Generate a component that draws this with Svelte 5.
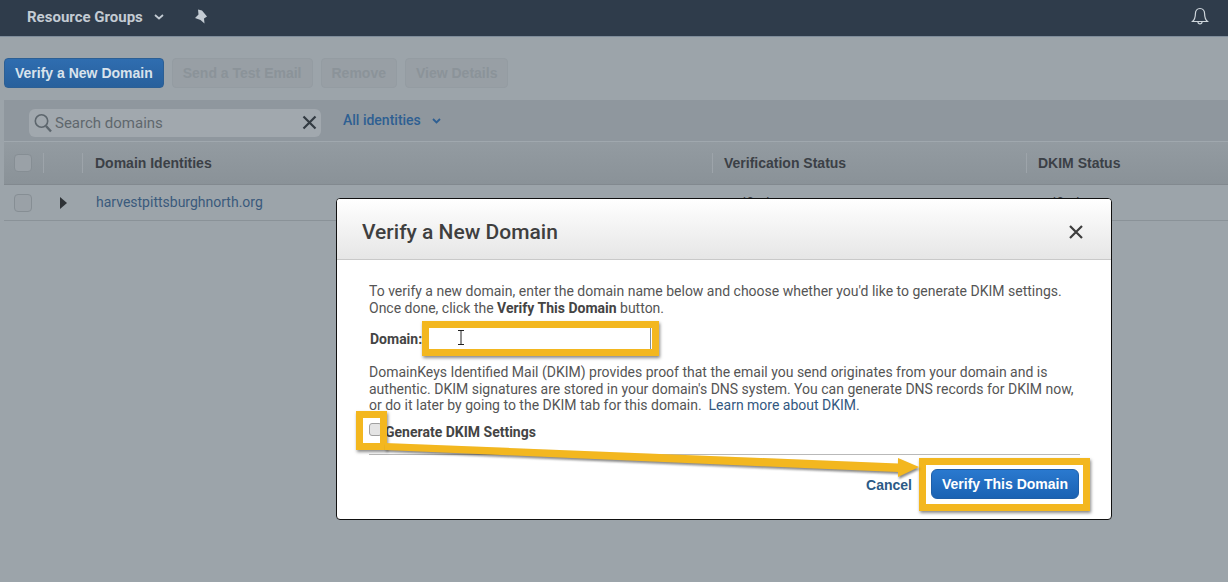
<script>
    // table columns behind the dialog
    const columns = ["Verification Status", "DKIM Status"];
    const toolbarActions = ["Send a Test Email", "Remove", "View Details"];
</script>

<div class="page">
    <header class="topbar">
        <span class="menu">Resource Groups</span>
        <svg class="chev" width="10" height="6" viewBox="0 0 10 6"><path d="M1 1l4 3.5L9 1" fill="none" stroke="#c3cbd3" stroke-width="1.8"/></svg>
        <svg class="pin" width="14" height="15" viewBox="0 0 14 15"><path d="M4 .5L8 1.500 13 7.500 10 9.500 10.500 14.500 6.500 11 1 9 4.500 5.500z" fill="#c3cbd3"/></svg>
        <svg class="bell" width="18" height="19" viewBox="0 0 18 19"><path d="M9 1.500c-3 0-4.600 2.300-4.600 5.300 0 3.500-.6 5.700-2.900 7.700h15c-2.300-2-2.900-4.200-2.900-7.700 0-3-1.600-5.300-4.600-5.300zM7 15c0 2.400 4 2.400 4 0" fill="none" stroke="#cfd6dc" stroke-width="1.2"/></svg>
    </header>

    <div class="toolbar">
        <button class="primary">Verify a New Domain</button>
        {#each toolbarActions as action}
            <button class="disabled">{action}</button>
        {/each}
    </div>

    <section class="panel">
        <div class="filters">
            <div class="search">
                <svg width="20" height="22" viewBox="0 0 20 22"><circle cx="8.500" cy="9" r="6.200" fill="none" stroke="#5d666d" stroke-width="1.600"/><path d="M13 14l5 5.500" stroke="#5d666d" stroke-width="2.400"/></svg>
                <span class="placeholder">Search domains</span>
                <svg class="clear" width="15" height="15" viewBox="0 0 15 15"><path d="M1.500 1.500l12 12M13.500 1.500l-12 12" stroke="#333b42" stroke-width="2.200"/></svg>
            </div>
            <span class="filter-link">All identities</span>
            <svg width="9" height="6" viewBox="0 0 9 6"><path d="M1 1l3.500 3.500L8 1" fill="none" stroke="#2e5f92" stroke-width="1.800"/></svg>
        </div>
        <div class="head">
            <div class="cell-check"><span class="box"></span></div>
            <div class="cell-arrow"></div>
            <div class="cell-name">Domain Identities</div>
            <div class="cell-status">{columns[0]}</div>
            <div class="cell-dkim">{columns[1]}</div>
        </div>
        <div class="row">
            <div class="cell-check"><span class="box"></span></div>
            <div class="cell-arrow"><span class="tri"></span></div>
            <a class="cell-name" href="#top">harvestpittsburghnorth.org</a>
            <div class="cell-status">verified</div>
            <div class="cell-dkim">verified</div>
        </div>
    </section>

    <div class="modal">
        <div class="modal-head">
            <h2>Verify a New Domain</h2>
            <svg width="16" height="16" viewBox="0 0 16 16"><path d="M2 2l12 12M14 2L2 14" stroke="#3d3d3d" stroke-width="2.200"/></svg>
        </div>
        <div class="modal-body">
            <p class="intro">To verify a new domain, enter the domain name below and choose whether you'd like to generate DKIM settings. Once done, click the <b>Verify This Domain</b> button.</p>
            <div class="domain-row">
                <label for="domain">Domain:</label>
                <input id="domain" type="text" />
            </div>
            <p class="about">DomainKeys Identified Mail (DKIM) provides proof that the email you send originates from your domain and is authentic. DKIM signatures are stored in your domain's DNS system. You can generate DNS records for DKIM now, or do it later by going to the DKIM tab for this domain. &nbsp;<a href="#top">Learn more about DKIM.</a></p>
            <div class="dkim-row">
                <span class="check"></span>
                <b>Generate DKIM Settings</b>
            </div>
            <div class="rule"></div>
            <div class="actions">
                <span class="cancel">Cancel</span>
                <button class="verify">Verify This Domain</button>
            </div>
        </div>
    </div>

    <!-- tutorial annotations drawn over the screenshot -->
    <div class="mark mark-input"></div>
    <svg class="ibeam" width="8" height="15" viewBox="0 0 8 15"><path d="M1 .5h6M1 14.500h6M4 .5v14" stroke="#222" stroke-width="1" fill="none"/></svg>
    <div class="mark mark-check"></div>
    <div class="mark mark-button"></div>
    <svg class="arrow" width="540" height="40" viewBox="0 0 540 40">
        <path d="M1 2L514 22.500 514 17 535 26 514 36 514 31 1 9z" fill="#f3b71f"/>
    </svg>
</div>

<style>
    :global(body) {
        margin: 0;
        background: #9ca4aa;
        overflow: hidden;
    }
    .page {
        position: relative;
        width: 1228px;
        height: 582px;
        overflow: hidden;
        background: #9ca4aa;
        font-family: Roboto, "Liberation Sans", sans-serif;
    }
    .topbar {
        display: flex;
        align-items: center;
        height: 37px;
        padding: 0 19px 3px 27px;
        box-sizing: border-box;
        background: #2f3c4b;
        border-bottom: 1px solid #7f8d9b;
    }
    .menu {
        color: #c3cbd3;
        font-size: 15px;
        font-weight: 700;
    }
    .chev {
        margin-left: 11px;
    }
    .pin {
        margin-left: 30px;
    }
    .bell {
        margin-left: auto;
    }
    .toolbar {
        display: flex;
        gap: 8px;
        padding: 21px 4px 0;
    }
    .toolbar button {
        height: 30px;
        padding: 0 10px;
        border-radius: 4px;
        font: 700 14px "Liberation Sans", Arial, sans-serif;
    }
    .primary {
        color: #d9e3ec;
        border: 1px solid #2c5f94;
        background: linear-gradient(#2f6db0, #28609c);
    }
    .disabled {
        color: #8b9399;
        border: 1px solid #949ca2;
        background: #989fa5;
    }
    .panel {
        margin: 12px 0 0 4px;
    }
    .filters {
        display: flex;
        align-items: center;
        height: 42px;
        box-sizing: border-box;
        padding: 4px 0 0 25px;
        background: #8f979e;
        border-bottom: 1px solid #a0a8ae;
    }
    .search {
        display: flex;
        align-items: center;
        width: 292px;
        height: 28px;
        box-sizing: border-box;
        padding: 0 4px 0 4px;
        border-radius: 6px;
        background: #a1a8ae;
    }
    .placeholder {
        margin-left: 2px;
        color: #5f676d;
        font-size: 15px;
    }
    .clear {
        margin-left: auto;
    }
    .filter-link {
        margin: 0 11px 5px 22px;
        color: #2e5f92;
        font-size: 14px;
        font-weight: 500;
    }
    .filters > svg {
        margin-bottom: 4px;
    }
    .head {
        display: flex;
        align-items: center;
        height: 43px;
        box-sizing: border-box;
        background: linear-gradient(#939ba1, #8a9298);
        border-bottom: 1px solid #82898f;
        color: #3b4046;
        font: 700 14px "Liberation Sans", Arial, sans-serif;
    }
    .head .cell-arrow {
        height: 20px;
        border-left: 1px solid #9da4aa;
        border-right: 1px solid #9da4aa;
    }
    .row {
        display: flex;
        align-items: center;
        height: 36px;
        box-sizing: border-box;
        border-bottom: 1px solid #8a9298;
        color: #3b4046;
        font-size: 14px;
    }
    .cell-check {
        width: 39px;
        padding-left: 10px;
        box-sizing: border-box;
    }
    .box {
        display: block;
        width: 18px;
        height: 18px;
        box-sizing: border-box;
        border: 1px solid #868e94;
        border-radius: 4px;
        background: #9aa1a7;
    }
    .cell-arrow {
        display: flex;
        justify-content: center;
        width: 40px;
        box-sizing: border-box;
        flex: none;
    }
    .tri {
        width: 0;
        height: 0;
        margin-right: -1px;
        border-left: 7px solid #2e3236;
        border-top: 6px solid transparent;
        border-bottom: 6px solid transparent;
    }
    .cell-name {
        width: 629px;
        padding-left: 12px;
        box-sizing: border-box;
    }
    a.cell-name {
        margin-top: -2px;
        padding-left: 13px;
        color: #3a5a7c;
        font: 400 14px Roboto, sans-serif;
        text-decoration: none;
    }
    .cell-status {
        width: 314px;
        height: 20px;
        line-height: 20px;
        padding-left: 11px;
        box-sizing: border-box;
        border-left: 1px solid #9da4aa;
    }
    .cell-dkim {
        height: 20px;
        line-height: 20px;
        padding-left: 11px;
        border-left: 1px solid #9da4aa;
    }
    .row .cell-status,
    .row .cell-dkim {
        border-left-color: transparent;
    }
    .row .cell-dkim {
        margin-left: -4px;
    }
    .modal {
        position: absolute;
        left: 336px;
        top: 198px;
        width: 776px;
        height: 322px;
        box-sizing: border-box;
        border: 1px solid #111;
        border-radius: 4px;
        background: #fff;
        overflow: hidden;
    }
    .modal-head {
        display: flex;
        align-items: center;
        justify-content: space-between;
        height: 61px;
        box-sizing: border-box;
        padding: 6px 27px 0 25px;
        background: linear-gradient(#fff, #e6e6e6);
        border-bottom: 1px solid #c9c9c9;
    }
    h2 {
        margin: 0;
        color: #3f3f3f;
        font-size: 21px;
        font-weight: 500;
    }
    .modal-body {
        padding: 23px 31px 0 32px;
        color: #555;
        font-size: 14px;
        line-height: 17px;
    }
    .modal-body p {
        margin: 0;
    }
    .modal-body b {
        color: #444;
        font-weight: 700;
    }
    .domain-row {
        display: flex;
        align-items: center;
        height: 30px;
        margin-top: 7px;
    }
    label {
        padding-left: 1px;
        color: #444;
        font-weight: 700;
    }
    input {
        width: 229px;
        height: 22px;
        margin-left: 0;
        padding: 0;
        box-sizing: border-box;
        border: 0;
        border-right: 1px solid #7d8f9e;
        outline: none;
        background: #fff;
    }
    .modal-body .about {
        margin-top: 10px;
        line-height: 16.500px;
    }
    .about a {
        color: #33587f;
        text-decoration: none;
    }
    .dkim-row {
        display: flex;
        align-items: center;
        gap: 3px;
        height: 20px;
        margin-top: 9px;
        font-size: 14px;
    }
    .check {
        width: 13px;
        height: 13px;
        margin: -6px 0 0 0;
        box-sizing: border-box;
        border: 1px solid #a0a0a0;
        border-radius: 3px;
        background: #e4e4e4;
    }
    .rule {
        height: 1px;
        margin: 11px 0 0 0;
        background: #b9b9b9;
    }
    .actions {
        display: flex;
        justify-content: flex-end;
        align-items: center;
        gap: 19px;
        margin: 14px 1px 0 0;
    }
    .cancel {
        color: #2c5a86;
        font: 700 14px "Liberation Sans", Arial, sans-serif;
        margin-top: 3px;
    }
    .verify {
        width: 148px;
        height: 30px;
        padding: 0;
        border: 1px solid #1f5fa8;
        border-radius: 6px;
        background: linear-gradient(#2a79cf, #1a62b3);
        color: #fff;
        font: 700 14px "Liberation Sans", Arial, sans-serif;
    }
    .mark {
        position: absolute;
        box-sizing: border-box;
        border: 7px solid #f3b71f;
        box-shadow: 1px 2px 3px rgba(40, 40, 40, 0.55);
    }
    .mark-input {
        left: 422px;
        top: 321px;
        width: 237px;
        height: 35px;
    }
    .mark-check {
        left: 356px;
        top: 411px;
        width: 31px;
        height: 39px;
    }
    .mark-button {
        left: 919px;
        top: 458px;
        width: 171px;
        height: 53px;
    }
    .ibeam {
        position: absolute;
        left: 457px;
        top: 330px;
    }
    .arrow {
        position: absolute;
        left: 384px;
        top: 441px;
        filter: drop-shadow(1px 2px 1px rgba(40, 40, 40, 0.55));
    }
</style>
